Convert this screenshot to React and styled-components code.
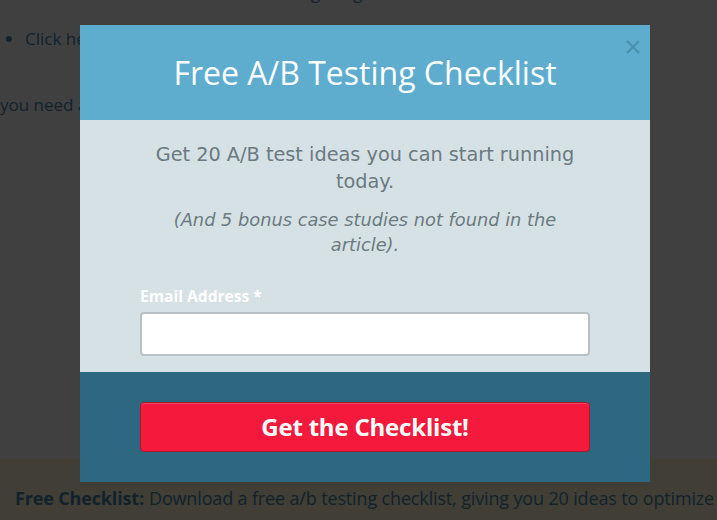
import React from "react";
import styled, { createGlobalStyle } from "styled-components";

const Global = createGlobalStyle`
  html, body { margin: 0; padding: 0; background: #fff; }
  body { font-family: "Open Sans", "Liberation Sans", sans-serif; overflow: hidden; }
  * { box-sizing: border-box; }
`;

const Page = styled.div`
  width: 717px;
  height: 520px;
  overflow: hidden;
  color: #4a88b4;
  font-size: 17px;
  line-height: 26px;
`;

const TopLine = styled.p`
  margin: -20px 0 0 0;
  padding-left: 177px;
  white-space: nowrap;
`;

const List = styled.ul`
  margin: 20px 0 0 0;
  padding-left: 25px;
`;

const Para = styled.p`
  margin: 40px 0 0 0;
  white-space: nowrap;
`;

const StickyBar = styled.div`
  position: fixed;
  left: 0;
  right: 0;
  bottom: 0;
  height: 61px;
  background: #fff8d4;
  display: flex;
  align-items: center;
  padding: 16px 0 0 15px;
  white-space: nowrap;
  font-size: 18px;
  letter-spacing: -0.15px;
  strong { font-weight: 700; margin-right: 5px; }
`;

const Overlay = styled.div`
  position: fixed;
  inset: 0;
  background: rgba(0, 0, 0, 0.75);
  padding: 25px 0 0 80px;
`;

const Modal = styled.div`
  position: relative;
  width: 570px;
  display: flex;
  flex-direction: column;
`;

const Header = styled.div`
  height: 95px;
  background: #5eadcf;
  display: flex;
  align-items: center;
  justify-content: center;
`;

const Title = styled.h1`
  margin: 0;
  color: #fff;
  font-family: "Open Sans", sans-serif;
  font-weight: 400;
  font-size: 32px;
  line-height: 40px;
`;

const Close = styled.button`
  position: absolute;
  top: 15px;
  right: 10px;
  width: 14px;
  height: 14px;
  padding: 0;
  border: 0;
  background: none;
  display: flex;
`;

const Body = styled.div`
  height: 252px;
  background: #d6e1e6;
  padding: 21px 40px 0;
  display: flex;
  flex-direction: column;
  align-items: center;
`;

const Lead = styled.p`
  margin: 0;
  font-family: "DejaVu Sans", "Liberation Sans", sans-serif;
  font-size: 19.3px;
  line-height: 27px;
  color: #6b7a80;
  text-align: center;
  padding: 0 20px;
`;

const Note = styled(Lead)`
  font-style: italic;
  font-size: 17.8px;
  line-height: 25px;
  margin-top: 12px;
  padding: 0 50px;
`;

const Form = styled.div`
  align-self: stretch;
  margin: auto 20px 0;
  padding-bottom: 16px;
  display: flex;
  flex-direction: column;
  gap: 6px;
`;

const Label = styled.label`
  color: #fff;
  font-weight: 700;
  font-size: 15.6px;
  line-height: 20px;
`;

const Input = styled.input`
  width: 450px;
  height: 44px;
  border: 2px solid #b9c0c3;
  border-radius: 4px;
  background: #fff;
  outline: none;
`;

const Footer = styled.div`
  height: 110px;
  background: #2e6780;
  padding: 30px 60px;
`;

const Submit = styled.button`
  width: 450px;
  height: 50px;
  background: #f51a3b;
  border: 1px solid #a51a2d;
  border-radius: 4px;
  box-shadow: inset 0 1px 0 rgba(255, 255, 255, 0.2);
  color: #fff;
  font-family: "Open Sans", sans-serif;
  font-weight: 700;
  font-size: 24px;
  letter-spacing: -0.2px;
  padding: 0 0 2px;
`;

export default function App() {
  return (
    <>
      <Global />
      <Page>
        <TopLine>Then start making a big difference</TopLine>
        <List>
          <li>Click here to download the full guide</li>
        </List>
        <Para>you need a reliable way to find what works for your visitors</Para>
        <StickyBar>
          <strong>Free Checklist:</strong> Download a free a/b testing checklist, giving you 20 ideas to optimize
        </StickyBar>
      </Page>
      <Overlay>
        <Modal>
          <Header>
            <Title>Free A/B Testing Checklist</Title>
          </Header>
          <Close aria-label="Close">
            <svg width="14" height="14" viewBox="0 0 14 14">
              <path d="M1 1 L13 13 M13 1 L1 13" stroke="#4a8fae" strokeWidth="2" />
            </svg>
          </Close>
          <Body>
            <Lead>Get 20 A/B test ideas you can start running today.</Lead>
            <Note>(And 5 bonus case studies not found in the article).</Note>
            <Form>
              <Label>Email Address *</Label>
              <Input type="email" />
            </Form>
          </Body>
          <Footer>
            <Submit>Get the Checklist!</Submit>
          </Footer>
        </Modal>
      </Overlay>
    </>
  );
}
